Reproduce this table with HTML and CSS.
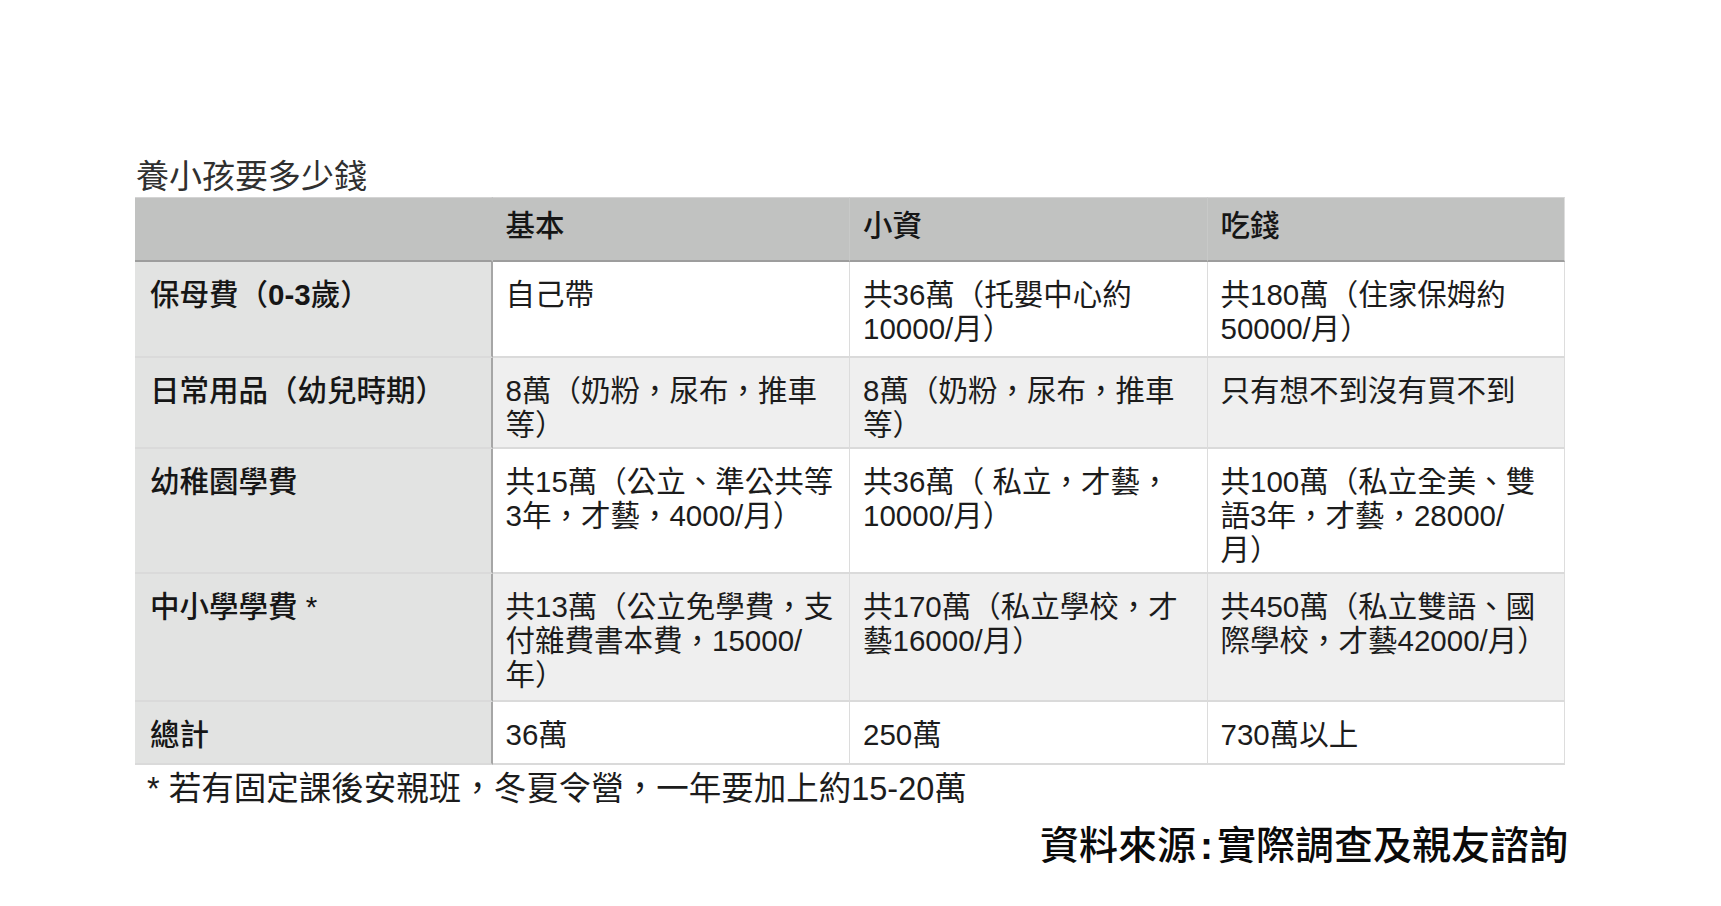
FILE: index.html
```html
<!DOCTYPE html>
<html lang="zh-Hant">
<head>
<meta charset="utf-8">
<title>養小孩要多少錢</title>
<link rel="stylesheet" href="styles.css">
</head>
<body>
<div class="page">
  <div class="title">養小孩要多少錢</div>
  <table class="cost">
    <thead>
      <tr class="r-head">
        <th class="stub"></th>
        <th>基本</th>
        <th>小資</th>
        <th>吃錢</th>
      </tr>
    </thead>
    <tbody>
      <tr class="r1">
        <th>保母費（<span class="num">0-3</span>歲）</th>
        <td>自己帶</td>
        <td>共36萬（托嬰中心約<br>10000/月）</td>
        <td>共180萬（住家保姆約<br>50000/月）</td>
      </tr>
      <tr class="r2 alt">
        <th>日常用品（幼兒時期）</th>
        <td>8萬（奶粉，尿布，推車<br>等）</td>
        <td>8萬（奶粉，尿布，推車<br>等）</td>
        <td>只有想不到沒有買不到</td>
      </tr>
      <tr class="r3">
        <th>幼稚園學費</th>
        <td>共15萬（公立、準公共等<br>3年，才藝，4000/月）</td>
        <td>共36萬（ 私立，才藝，<br>10000/月）</td>
        <td>共100萬（私立全美、雙<br>語3年，才藝，28000/<br>月）</td>
      </tr>
      <tr class="r4 alt">
        <th>中小學學費 *</th>
        <td>共13萬（公立免學費，支<br>付雜費書本費，15000/<br>年）</td>
        <td>共170萬（私立學校，才<br>藝16000/月）</td>
        <td>共450萬（私立雙語、國<br>際學校，才藝42000/月）</td>
      </tr>
      <tr class="r5">
        <th>總計</th>
        <td>36萬</td>
        <td>250萬</td>
        <td>730萬以上</td>
      </tr>
    </tbody>
  </table>
  <div class="note">* 若有固定課後安親班，冬夏令營，一年要加上約15-20萬</div>
  <div class="source">資料來源<span class="colon">:</span>實際調查及親友諮詢</div>
</div>
</body>
</html>
```

FILE: styles.css
```css
* {
  box-sizing: border-box;
}

html, body {
  margin: 0;
  padding: 0;
  background: #ffffff;
}

body {
  font-family: "Liberation Sans", "Noto Sans CJK TC", sans-serif;
  color: #1c1c1c;
}

.page {
  width: 1433px;
  padding: 157px 0 0 135px;
  box-sizing: content-box;
}

.title {
  font-size: 33px;
  line-height: 40px;
  color: #303030;
  padding-left: 1px;
}

.cost {
  width: 1430px;
  table-layout: fixed;
  border-collapse: separate;
  border-spacing: 0;
  font-size: 29.5px;
  line-height: 34px;
}

.cost th,
.cost td {
  vertical-align: top;
  text-align: left;
  white-space: nowrap;
  padding: 16px 6px 0 13px;
  border-right: 1px solid #dcdcdc;
  border-bottom: 2px solid #dadada;
}

.cost th {
  font-weight: 500;
  color: #161616;
}

.cost th .num {
  font-weight: 700;
}

.cost td {
  font-weight: 400;
}

.cost tbody th {
  background: #e2e3e2;
  border-right: 2px solid #a6a6a6;
  padding-left: 15px;
}

.cost tbody tr.alt td {
  background: #efefef;
}

.cost thead th {
  background: #c1c2c1;
  border-top: 1px solid #d4d4d4;
  border-right: 1px solid #c8c9c8;
  border-bottom: 2px solid #9d9d9d;
  padding-top: 11px;
}

.cost thead th.stub {
  border-right: 2px solid #c1c2c1;
}

.cost tr > :last-child {
  border-right: 1px solid #dddddd;
}

.r-head th { height: 65px; }
.r1 > * { height: 96px; }
.r2 > * { height: 91px; }
.r3 > * { height: 125px; }
.r4 > * { height: 128px; }
.r5 > * { height: 63px; }

.note {
  margin-top: 4px;
  padding-left: 12px;
  font-size: 32.5px;
  line-height: 40px;
  color: #1c1c1c;
}

.source {
  margin-top: 14px;
  text-align: right;
  font-size: 39px;
  line-height: 46px;
  font-weight: 500;
  color: #0a0a0a;
}

.colon {
  padding: 0 4px;
  font-weight: 700;
}
```
